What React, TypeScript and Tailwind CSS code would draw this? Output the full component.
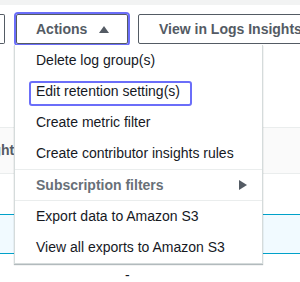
import React from "react";

const items1 = [
  "Delete log group(s)",
  "Edit retention setting(s)",
  "Create metric filter",
  "Create contributor insights rules",
];
const items3 = ["Export data to Amazon S3", "View all exports to Amazon S3"];

export default function App() {
  return (
    <div className="relative w-[300px] h-[282px] overflow-hidden bg-white font-['Liberation_Sans',Arial,sans-serif] text-[14px]">
      <div className="h-[5px] bg-[#f2f3f3]" />
      {/* button bar */}
      <div className="mt-[9px] flex h-[30px] items-stretch gap-[11px]">
        <div className="w-[5px] shrink-0 rounded-r-[2px] border border-l-0 border-[#545b64] bg-white" />
        <button className="flex w-[112px] shrink-0 items-center rounded-[2px] border border-[#545b64] bg-white pl-[19px] pr-[18px] font-bold text-[#545b64] outline-2 outline-offset-0 outline-[#6b6ef9]">
          <span className="leading-none">Actions</span>
          <svg className="ml-auto" width="10" height="7" viewBox="0 0 10 7">
            <path d="M5 0 L10 7 L0 7 Z" fill="#545b64" />
          </svg>
        </button>
        <button className="ml-[-1px] flex shrink-0 items-center whitespace-nowrap rounded-[2px] border border-[#545b64] bg-white pl-[20px] pr-[20px] font-bold text-[#545b64]">
          View in Logs Insights
        </button>
      </div>
      {/* table */}
      <div className="mt-[83px] flex h-[47px] items-center border-y border-[#eaeded] bg-[#fafafa]">
        <div className="flex w-[22px] justify-end overflow-hidden whitespace-nowrap font-bold text-[#545b64]">
          Insights
        </div>
      </div>
      <div className="h-[40px]" />
      <div className="h-[40px] border-y border-[#00a1c9] bg-[#f1faff]" />
      <div className="flex h-[42px] items-center pl-[125px] text-[#16191f]">-</div>

      {/* dropdown menu */}
      <div className="absolute left-[14px] top-[45px] w-[249px] border-x border-b border-[#d5dbdb] bg-white shadow-[0_1px_1px_0_rgba(0,28,36,0.3)] text-[#16191f]">
        <div>
          {items1.map((t, i) => (
            <div key={t} className="relative flex h-[31px] items-center whitespace-nowrap pl-[21px]">
              {i === 1 && (
                <span className="absolute left-[14px] top-[5px] h-[25px] w-[163px] rounded-[3px] border-2 border-[#6b6ef9]" />
              )}
              <span className="relative">{t}</span>
            </div>
          ))}
        </div>
        <div className="flex h-[32px] items-center justify-between border-y border-[#eaeded] pl-[21px] pr-[15px] font-bold text-[#687078]">
          <span>Subscription filters</span>
          <svg width="8" height="10" viewBox="0 0 8 10">
            <path d="M0 0 L8 5 L0 10 Z" fill="#545b64" />
          </svg>
        </div>
        <div>
          {items3.map((t) => (
            <div key={t} className="flex h-[31px] items-center whitespace-nowrap pl-[21px]">
              {t}
            </div>
          ))}
        </div>
      </div>
    </div>
  );
}
